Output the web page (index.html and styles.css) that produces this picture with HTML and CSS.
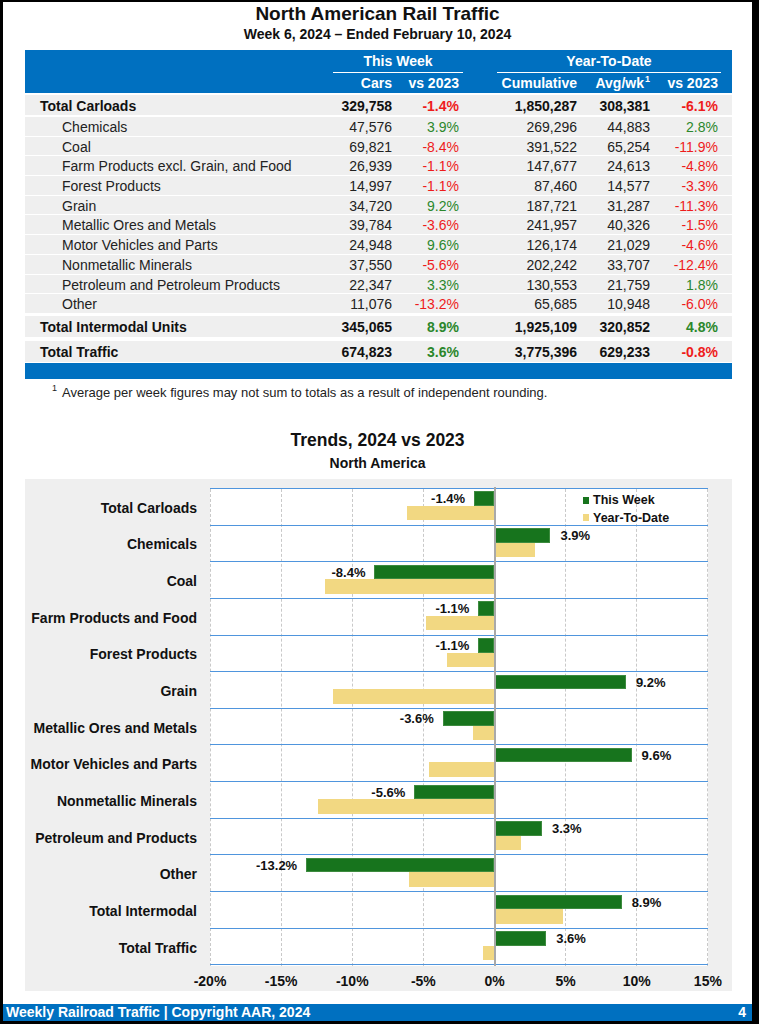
FILE: index.html
```html
<!DOCTYPE html>
<html lang="en">
<head>
<meta charset="utf-8">
<title>North American Rail Traffic</title>
<link rel="stylesheet" href="styles.css">
</head>
<body>
<div class="page">
  <h1 class="title">North American Rail Traffic</h1>
  <div class="subtitle">Week 6, 2024 – Ended February 10, 2024</div>

  <div class="table">
    <div class="thead">
      <div class="hrow hgroup">
        <span class="grp grp-tw">This Week</span>
        <span class="grp grp-ytd">Year-To-Date</span>
      </div>
      <div class="hrow hsub">
        <span class="c2">Cars</span>
        <span class="c3">vs 2023</span>
        <span class="c5">Cumulative</span>
        <span class="c6">Avg/wk<sup>1</sup></span>
        <span class="c7">vs 2023</span>
      </div>
    </div>

    <div class="row total first">
      <span class="lbl">Total Carloads</span><span class="c2">329,758</span><span class="c3 red">-1.4%</span><span class="c5">1,850,287</span><span class="c6">308,381</span><span class="c7 red">-6.1%</span>
    </div>
    <div class="row detail second">
      <span class="lbl">Chemicals</span><span class="c2">47,576</span><span class="c3 grn">3.9%</span><span class="c5">269,296</span><span class="c6">44,883</span><span class="c7 grn">2.8%</span>
    </div>
    <div class="row detail">
      <span class="lbl">Coal</span><span class="c2">69,821</span><span class="c3 red">-8.4%</span><span class="c5">391,522</span><span class="c6">65,254</span><span class="c7 red">-11.9%</span>
    </div>
    <div class="row detail">
      <span class="lbl">Farm Products excl. Grain, and Food</span><span class="c2">26,939</span><span class="c3 red">-1.1%</span><span class="c5">147,677</span><span class="c6">24,613</span><span class="c7 red">-4.8%</span>
    </div>
    <div class="row detail">
      <span class="lbl">Forest Products</span><span class="c2">14,997</span><span class="c3 red">-1.1%</span><span class="c5">87,460</span><span class="c6">14,577</span><span class="c7 red">-3.3%</span>
    </div>
    <div class="row detail">
      <span class="lbl">Grain</span><span class="c2">34,720</span><span class="c3 grn">9.2%</span><span class="c5">187,721</span><span class="c6">31,287</span><span class="c7 red">-11.3%</span>
    </div>
    <div class="row detail">
      <span class="lbl">Metallic Ores and Metals</span><span class="c2">39,784</span><span class="c3 red">-3.6%</span><span class="c5">241,957</span><span class="c6">40,326</span><span class="c7 red">-1.5%</span>
    </div>
    <div class="row detail">
      <span class="lbl">Motor Vehicles and Parts</span><span class="c2">24,948</span><span class="c3 grn">9.6%</span><span class="c5">126,174</span><span class="c6">21,029</span><span class="c7 red">-4.6%</span>
    </div>
    <div class="row detail">
      <span class="lbl">Nonmetallic Minerals</span><span class="c2">37,550</span><span class="c3 red">-5.6%</span><span class="c5">202,242</span><span class="c6">33,707</span><span class="c7 red">-12.4%</span>
    </div>
    <div class="row detail">
      <span class="lbl">Petroleum and Petroleum Products</span><span class="c2">22,347</span><span class="c3 grn">3.3%</span><span class="c5">130,553</span><span class="c6">21,759</span><span class="c7 grn">1.8%</span>
    </div>
    <div class="row detail">
      <span class="lbl">Other</span><span class="c2">11,076</span><span class="c3 red">-13.2%</span><span class="c5">65,685</span><span class="c6">10,948</span><span class="c7 red">-6.0%</span>
    </div>
    <div class="row total big im">
      <span class="lbl">Total Intermodal Units</span><span class="c2">345,065</span><span class="c3 grn">8.9%</span><span class="c5">1,925,109</span><span class="c6">320,852</span><span class="c7 grn">4.8%</span>
    </div>
    <div class="row total big tt">
      <span class="lbl">Total Traffic</span><span class="c2">674,823</span><span class="c3 grn">3.6%</span><span class="c5">3,775,396</span><span class="c6">629,233</span><span class="c7 red">-0.8%</span>
    </div>
    <div class="tfoot"></div>
  </div>

  <p class="footnote"><sup>1</sup>Average per week figures may not sum to totals as a result of independent rounding.</p>

  <h2 class="ctitle">Trends, 2024 vs 2023</h2>
  <div class="csub">North America</div>

  <div class="chart">
    <div class="labels">
      <div class="lab">Total Carloads</div>
      <div class="lab">Chemicals</div>
      <div class="lab">Coal</div>
      <div class="lab">Farm Products and Food</div>
      <div class="lab">Forest Products</div>
      <div class="lab">Grain</div>
      <div class="lab">Metallic Ores and Metals</div>
      <div class="lab">Motor Vehicles and Parts</div>
      <div class="lab">Nonmetallic Minerals</div>
      <div class="lab">Petroleum and Products</div>
      <div class="lab">Other</div>
      <div class="lab">Total Intermodal</div>
      <div class="lab">Total Traffic</div>
    </div>
    <div class="plot">
      <div class="grid">
        <span></span><span></span><span></span><span></span><span></span><span></span><span></span>
      </div>
      <div class="zero"></div>
      <div class="cats">
        <div class="cat">
          <div class="track"><div class="bar wk neg" style="--v:-1.4"><span class="val">-1.4%</span></div></div>
          <div class="track"><div class="bar ytd neg" style="--v:-6.1"></div></div>
        </div>
        <div class="cat">
          <div class="track"><div class="bar wk pos" style="--v:3.9"><span class="val">3.9%</span></div></div>
          <div class="track"><div class="bar ytd pos" style="--v:2.8"></div></div>
        </div>
        <div class="cat">
          <div class="track"><div class="bar wk neg" style="--v:-8.4"><span class="val">-8.4%</span></div></div>
          <div class="track"><div class="bar ytd neg" style="--v:-11.9"></div></div>
        </div>
        <div class="cat">
          <div class="track"><div class="bar wk neg" style="--v:-1.1"><span class="val">-1.1%</span></div></div>
          <div class="track"><div class="bar ytd neg" style="--v:-4.8"></div></div>
        </div>
        <div class="cat">
          <div class="track"><div class="bar wk neg" style="--v:-1.1"><span class="val">-1.1%</span></div></div>
          <div class="track"><div class="bar ytd neg" style="--v:-3.3"></div></div>
        </div>
        <div class="cat">
          <div class="track"><div class="bar wk pos" style="--v:9.2"><span class="val">9.2%</span></div></div>
          <div class="track"><div class="bar ytd neg" style="--v:-11.3"></div></div>
        </div>
        <div class="cat">
          <div class="track"><div class="bar wk neg" style="--v:-3.6"><span class="val">-3.6%</span></div></div>
          <div class="track"><div class="bar ytd neg" style="--v:-1.5"></div></div>
        </div>
        <div class="cat">
          <div class="track"><div class="bar wk pos" style="--v:9.6"><span class="val">9.6%</span></div></div>
          <div class="track"><div class="bar ytd neg" style="--v:-4.6"></div></div>
        </div>
        <div class="cat">
          <div class="track"><div class="bar wk neg" style="--v:-5.6"><span class="val">-5.6%</span></div></div>
          <div class="track"><div class="bar ytd neg" style="--v:-12.4"></div></div>
        </div>
        <div class="cat">
          <div class="track"><div class="bar wk pos" style="--v:3.3"><span class="val">3.3%</span></div></div>
          <div class="track"><div class="bar ytd pos" style="--v:1.8"></div></div>
        </div>
        <div class="cat">
          <div class="track"><div class="bar wk neg" style="--v:-13.2"><span class="val">-13.2%</span></div></div>
          <div class="track"><div class="bar ytd neg" style="--v:-6.0"></div></div>
        </div>
        <div class="cat">
          <div class="track"><div class="bar wk pos" style="--v:8.9"><span class="val">8.9%</span></div></div>
          <div class="track"><div class="bar ytd pos" style="--v:4.8"></div></div>
        </div>
        <div class="cat">
          <div class="track"><div class="bar wk pos" style="--v:3.6"><span class="val">3.6%</span></div></div>
          <div class="track"><div class="bar ytd neg" style="--v:-0.8"></div></div>
        </div>
      </div>
      <div class="legend">
        <div class="li"><span class="sw sw-wk"></span>This Week</div>
        <div class="li"><span class="sw sw-ytd"></span>Year-To-Date</div>
      </div>
    </div>
    <div class="axis">
      <span>-20%</span><span>-15%</span><span>-10%</span><span>-5%</span><span>0%</span><span>5%</span><span>10%</span><span>15%</span>
    </div>
  </div>

  <div class="footer">
    <span>Weekly Railroad Traffic | Copyright AAR, 2024</span>
    <span>4</span>
  </div>
</div>
</body>
</html>
```

FILE: styles.css
```css
* { box-sizing: border-box; }

html, body {
  margin: 0;
  padding: 0;
  background: #000;
}

body {
  font-family: "Liberation Sans", Arial, Helvetica, sans-serif;
  color: #1a1a1a;
}

.page {
  margin: 2px 0 0 3px;
  width: 749px;
  height: 1019px;
  background: #fff;
  display: flex;
  flex-direction: column;
}

.title {
  margin: 0;
  font-size: 19px;
  line-height: 24px;
  font-weight: bold;
  text-align: center;
  color: #111;
}

.subtitle {
  font-size: 14px;
  line-height: 16px;
  font-weight: bold;
  text-align: center;
  color: #111;
}

/* ---------- table ---------- */
.table {
  margin: 8px 0 0 22px;
  width: 707px;
  font-size: 14px;
}

.thead {
  background: #0070c0;
  color: #fff;
  font-weight: bold;
  height: 43px;
}

.hrow,
.row {
  display: grid;
  grid-template-columns: 308px 64px 66px 34px 85px 73px 66px 11px;
}

.hgroup {
  padding-top: 3px;
  height: 23px;
}

.grp {
  text-align: center;
  line-height: 16px;
  height: 20px;
  border-bottom: 1.5px solid #fff;
}

.grp-tw { grid-column: 2 / 4; }
.grp-ytd { grid-column: 5 / 8; }

.hsub {
  height: 20px;
  line-height: 20px;
}

.hsub sup {
  font-size: 9px;
  line-height: 0;
  vertical-align: 6px;
  margin-left: 1px;
}

.c2 { grid-column: 2; text-align: right; padding-right: 5px; }
.c3 { grid-column: 3; text-align: right; padding-right: 4px; }
.c5 { grid-column: 5; text-align: right; padding-right: 5px; }
.c6 { grid-column: 6; text-align: right; padding-right: 5px; }
.c7 { grid-column: 7; text-align: right; padding-right: 3px; }

.row {
  background: #efefef;
  white-space: nowrap;
}

.row .lbl { grid-column: 1; }

.row.total {
  font-weight: bold;
  color: #111;
}

.row.total .lbl { padding-left: 15px; }
.row.detail .lbl { padding-left: 37px; }

.row.first {
  margin-top: 2px;
  height: 20px;
  line-height: 22px;
}

.row.detail {
  margin-top: 1px;
  height: 18.7px;
  line-height: 21.5px;
  color: #222;
}

.row.detail.second { margin-top: 2px; }

.row.big {
  height: 21px;
  line-height: 23px;
}

.row.im { margin-top: 3px; }
.row.tt { margin-top: 4px; }

.red { color: #ee1c1c; }
.grn { color: #2b872b; }

.tfoot {
  margin-top: 1px;
  height: 16px;
  background: #0070c0;
}

.footnote {
  margin: 6px 0 0;
  padding-left: 49px;
  font-size: 13px;
  line-height: 16px;
  color: #222;
}

.footnote sup {
  font-size: 9px;
  line-height: 0;
  vertical-align: 6px;
  margin-right: 5px;
}

/* ---------- chart ---------- */
.ctitle {
  margin: 28px 0 0;
  font-size: 17.5px;
  line-height: 22px;
  font-weight: bold;
  text-align: center;
  color: #111;
}

.csub {
  font-size: 14px;
  line-height: 18px;
  font-weight: bold;
  text-align: center;
  color: #111;
  margin-top: 3px;
}

.chart {
  margin: 7px 0 0 22px;
  width: 707px;
  height: 512px;
  background: #efefef;
  padding-top: 9px;
  display: grid;
  grid-template-columns: 185px 498px;
  grid-template-rows: 478.2px 24.8px;
}

.labels {
  grid-column: 1;
  grid-row: 1;
  padding-top: 1.5px;
  display: flex;
  flex-direction: column;
}

.lab {
  height: 36.67px;
  display: flex;
  align-items: center;
  justify-content: flex-end;
  padding-right: 13px;
  font-size: 14px;
  font-weight: bold;
  color: #111;
  white-space: nowrap;
}

.plot {
  grid-column: 2;
  grid-row: 1;
  position: relative;
  background: #fff;
  border-top: 1.5px solid #4f95dd;
}

.grid {
  position: absolute;
  inset: 0;
  display: flex;
}

.grid span {
  flex: 1;
  border-left: 1px dashed #c9c9c9;
}

.grid span:last-child {
  border-right: 1px dashed #c9c9c9;
}

.zero {
  position: absolute;
  top: -1.5px;
  bottom: 0;
  left: 283.5px;
  width: 2px;
  background: #a9a9a9;
  z-index: 3;
}

.cats {
  position: relative;
  z-index: 2;
}

.cat {
  height: 36.67px;
  padding-top: 2.5px;
  border-bottom: 1.5px solid #4f95dd;
}

.track {
  height: 14.5px;
  display: flex;
}

.bar {
  position: relative;
  height: 100%;
}

.bar.pos {
  margin-left: 285px;
  width: calc(var(--v) * 14.228px);
}

.bar.neg {
  margin-left: calc(284px + var(--v) * 14.228px);
  width: calc(var(--v) * -14.228px);
}

.bar.wk {
  background: #17741d;
  box-shadow: inset 0 0 0 1px #3d8b3f;
}

.bar.ytd {
  background: #f2d882;
}

.val {
  position: absolute;
  top: 0;
  line-height: 15.5px;
  font-size: 13px;
  font-weight: bold;
  color: #111;
  white-space: nowrap;
}

.bar.neg .val { right: calc(100% + 9px); }
.bar.pos .val { left: calc(100% + 10px); }

.legend {
  position: absolute;
  left: 373px;
  top: 2.5px;
  z-index: 4;
  font-size: 12.5px;
  font-weight: bold;
  color: #111;
}

.li {
  display: flex;
  align-items: center;
  height: 17.5px;
}

.sw {
  width: 6px;
  height: 7px;
  margin-right: 4px;
}

.sw-wk { background: #17741d; }
.sw-ytd { background: #f2d882; }

.axis {
  grid-column: 2;
  grid-row: 2;
  display: flex;
  margin-left: -35.57px;
  width: 569.1px;
  padding-top: 7px;
}

.axis span {
  width: 71.14px;
  flex: none;
  text-align: center;
  font-size: 14px;
  font-weight: bold;
  line-height: 16px;
  color: #111;
}

/* ---------- footer ---------- */
.footer {
  margin-top: auto;
  height: 17px;
  background: #0070c0;
  color: #fff;
  font-size: 14px;
  font-weight: bold;
  line-height: 17px;
  display: flex;
  justify-content: space-between;
  padding: 0 6px 0 3px;
}
```
